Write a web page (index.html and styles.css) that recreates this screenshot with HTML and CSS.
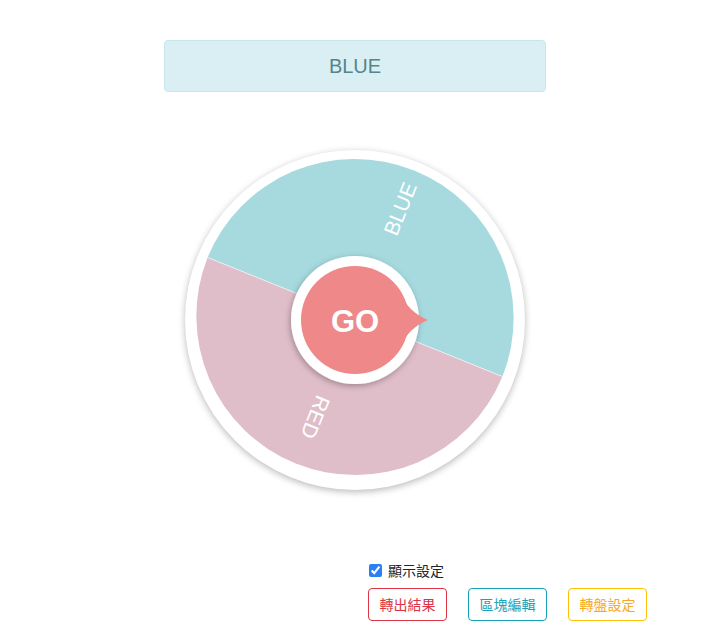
FILE: index.html
```html
<!DOCTYPE html>
<html lang="zh-Hant">
<head>
<meta charset="utf-8">
<title>Wheel</title>
<link rel="stylesheet" href="styles.css">
</head>
<body>
<div class="page">
  <div class="result">BLUE</div>
  <div class="wheel">
    <svg class="wheel-svg" width="340" height="340" viewBox="0 0 340 340">
      <defs>
        <filter id="sh" x="-30%" y="-30%" width="160%" height="160%">
          <feDropShadow dx="-1" dy="2" stdDeviation="3" flood-color="#000" flood-opacity="0.3"/>
        </filter>
      </defs>
      <g transform="translate(170 167)">
        <path d="M-147.42 -59.56 A159 159 0 0 1 147.42 59.56 Z" fill="#a6dadf"/>
        <path d="M147.42 59.56 A159 159 0 0 1 -147.42 -59.56 Z" fill="#e0bec9"/>
        <line x1="-147.42" y1="-59.56" x2="147.42" y2="59.56" stroke="#ffffff" stroke-opacity="0.6" stroke-width="1"/>
      </g>
      <text class="seg-label" transform="translate(170 170) rotate(-68) translate(120 0)" text-anchor="middle" dominant-baseline="central">BLUE</text>
      <text class="seg-label" transform="translate(170 170) rotate(112) translate(105 0)" text-anchor="middle" dominant-baseline="central">RED</text>
      <circle cx="170" cy="170" r="64" fill="#ffffff" filter="url(#sh)"/>
      <g transform="translate(170 170)">
        <circle cx="0" cy="0" r="54" fill="#ef8888"/>
        <path d="M47 -24 Q54 -8 73 0 Q54 8 47 24 Z" fill="#ef8888"/>
      </g>
      <text class="go" x="170" y="171" text-anchor="middle" dominant-baseline="central">GO</text>
    </svg>
  </div>
  <div class="controls">
    <label class="check"><input type="checkbox" checked> <span>顯示設定</span></label>
    <div class="buttons">
      <button class="btn btn-red">轉出結果</button>
      <button class="btn btn-teal">區塊編輯</button>
      <button class="btn btn-yellow">轉盤設定</button>
    </div>
  </div>
</div>
</body>
</html>
```
FILE: styles.css
```css
html, body {
  margin: 0;
  padding: 0;
  background: #ffffff;
}
body {
  font-family: "Liberation Sans", "Noto Sans CJK TC", sans-serif;
  color: #212529;
}
.page {
  width: 710px;
  padding-top: 40px;
}
.result {
  box-sizing: border-box;
  width: 382px;
  height: 52px;
  margin-left: 164px;
  background: #daeff4;
  border: 1px solid #c8e7ed;
  border-radius: 4px;
  color: #55848c;
  font-size: 20px;
  line-height: 50px;
  text-align: center;
}
.wheel {
  width: 340px;
  height: 340px;
  margin: 58px 0 0 185px;
  border-radius: 50%;
  background: #ffffff;
  box-shadow: 0 2px 7px rgba(0, 0, 0, 0.28);
}
.wheel-svg {
  display: block;
}
.seg-label {
  fill: #ffffff;
  font-family: "Liberation Sans", sans-serif;
  font-size: 21px;
}
.go {
  fill: #ffffff;
  font-family: "Liberation Sans", sans-serif;
  font-weight: bold;
  font-size: 31px;
}
.controls {
  margin: 70px 0 0 368px;
}
.check {
  display: flex;
  align-items: center;
  height: 21px;
  font-family: "Noto Sans CJK TC", sans-serif;
  font-size: 14px;
  line-height: 21px;
}
.check input {
  width: 13px;
  height: 13px;
  margin: 0 6px 0 1px;
  accent-color: #2b7ff5;
}
.buttons {
  display: flex;
  gap: 21px;
  margin-top: 7px;
}
.btn {
  box-sizing: border-box;
  height: 33px;
  width: 79px;
  padding: 0;
  background: #ffffff;
  border: 1px solid;
  border-radius: 4px;
  font-family: "Noto Sans CJK TC", sans-serif;
  font-size: 14px;
  line-height: 31px;
  text-align: center;
}
.btn-red {
  color: #dc3545;
  border-color: #dc3545;
}
.btn-teal {
  color: #17a2b8;
  border-color: #17a2b8;
}
.btn-yellow {
  color: #f7a823;
  border-color: #ffc107;
}
```
